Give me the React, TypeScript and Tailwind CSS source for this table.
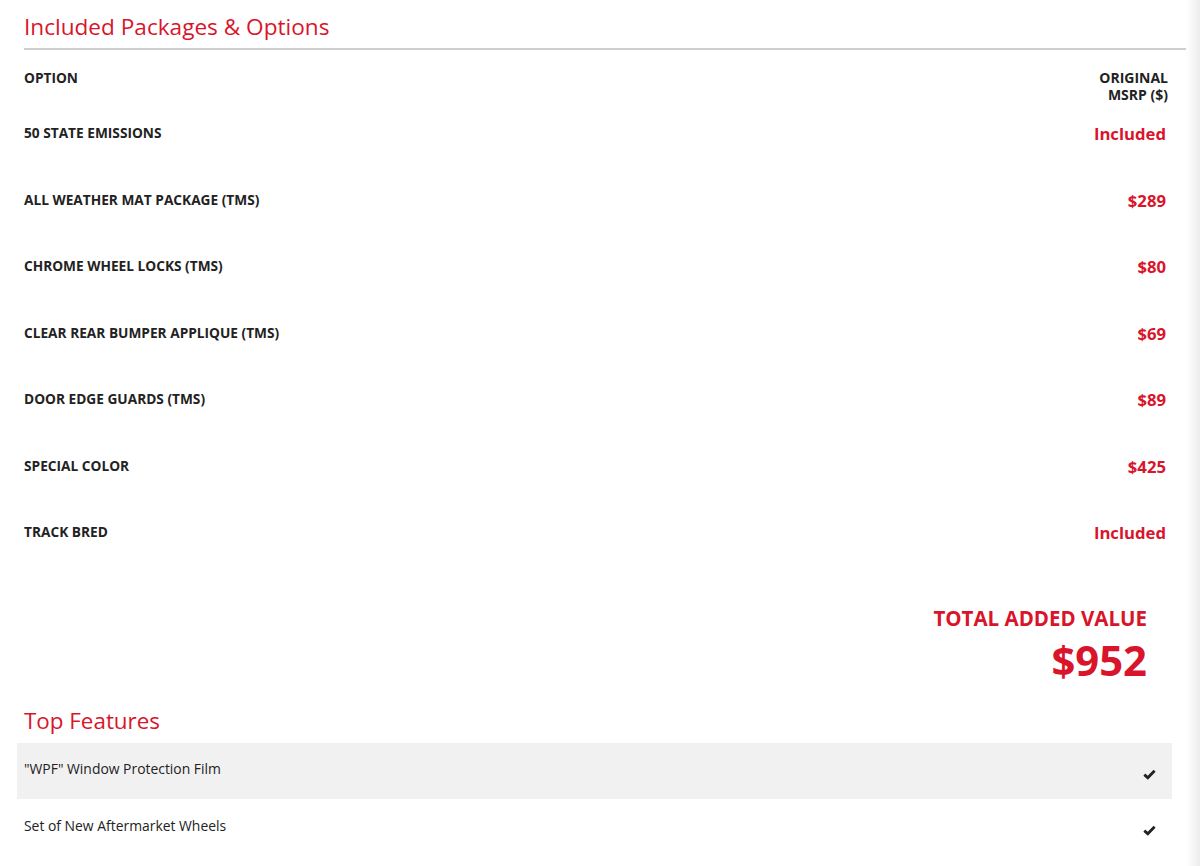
const options = [
  { name: "50 STATE EMISSIONS", price: "Included" },
  { name: "ALL WEATHER MAT PACKAGE (TMS)", price: "$289" },
  { name: "CHROME WHEEL LOCKS (TMS)", price: "$80" },
  { name: "CLEAR REAR BUMPER APPLIQUE (TMS)", price: "$69" },
  { name: "DOOR EDGE GUARDS (TMS)", price: "$89" },
  { name: "SPECIAL COLOR", price: "$425" },
  { name: "TRACK BRED", price: "Included" },
];

const features = ['"WPF" Window Protection Film', "Set of New Aftermarket Wheels"];

const Check = () => (
  <svg width="13" height="11" viewBox="0 0 13 11" className="text-[#222]">
    <path d="M1.3 5.6 L4.8 8.8 L11.6 1.8" fill="none" stroke="currentColor" strokeWidth="2.8" strokeLinejoin="miter" />
  </svg>
);

const App = () => {
  return (
    <div className="flex w-[1200px] h-[866px] overflow-hidden bg-white font-['Open_Sans',sans-serif] text-[#222]">
      <div className="flex-1 flex flex-col">
        <div className="pl-6">
          <h2 className="text-[22.6px] leading-[32px] text-[#d9152b] pt-[11px] pb-[5px]">
            Included Packages &amp; Options
          </h2>
          <div className="h-[2px] bg-[#cfcfcf]" />
          <div className="pr-[18px]">
            <div className="flex justify-between pt-[19px] text-[13.7px] font-bold leading-[17px]">
              <span>OPTION</span>
              <span className="text-right text-[14px]">
                ORIGINAL
                <br />
                MSRP ($)
              </span>
            </div>
            <div className="-mt-[2.5px]">
              {options.map((item, index) => (
                <div key={index} className="flex justify-between items-center h-[66.5px]">
                  <span className="text-[13.7px] font-bold">{item.name}</span>
                  <span className="text-[16.7px] font-bold text-[#d9152b] pr-[2px]">{item.price}</span>
                </div>
              ))}
            </div>
          </div>
          <div className="flex flex-col items-end pr-[39px] pt-[39px] text-[#d9152b] font-bold">
            <span className="text-[20.5px] leading-[26px]">TOTAL ADDED VALUE</span>
            <span className="text-[41.8px] leading-[52px] mt-[3px]">$952</span>
          </div>
          <h2 className="text-[22.4px] leading-[32px] text-[#d9152b] pt-[19px] pb-[6px]">Top Features</h2>
        </div>
        <div className="pl-[17px] pr-[14px]">
          {features.map((f, i) => (
            <div
              key={i}
              className={`flex justify-between items-center h-[56px] pl-[7px] pr-[16px] text-[13.9px] ${i % 2 === 0 ? "bg-[#f2f1f2]" : "bg-white"}`}
            >
              <span className={i === 1 ? "-mt-[2px]" : "-mt-[4px]"}>{f}</span>
              <span className="pt-[6px]">
                <Check />
              </span>
            </div>
          ))}
        </div>
      </div>
      <div className="w-[14px] bg-gradient-to-r from-white to-[#ececec]" />
    </div>
  );
};

export default App;
